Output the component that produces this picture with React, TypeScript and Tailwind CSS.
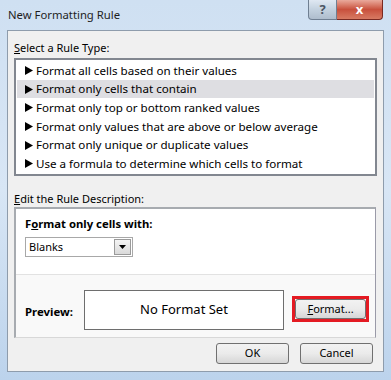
import React from "react";

const items = [
  "Format all cells based on their values",
  "Format only cells that contain",
  "Format only top or bottom ranked values",
  "Format only values that are above or below average",
  "Format only unique or duplicate values",
  "Use a formula to determine which cells to format",
];

function Arrow() {
  return (
    <svg width="8" height="9" viewBox="0 0 8 9" className="mr-[3px] shrink-0">
      <path d="M0 0 L8 4.5 L0 9 Z" fill="#000" />
    </svg>
  );
}

const btn =
  "border border-[#707070] rounded-[3px] bg-gradient-to-b from-[#f2f2f2] via-[#ebebeb] to-[#d6d6d6] flex items-center justify-center";

export default function App() {
  return (
    <div
      className="w-[391px] h-[380px] overflow-hidden flex flex-col bg-gradient-to-b from-[#cfe0f2] via-[#d8e6f5] to-[#bcd3ec] text-[11px] text-black"
      style={{ fontFamily: '"Noto Sans", "Open Sans", sans-serif' }}
    >
      {/* title bar */}
      <div className="h-[30px] flex items-start justify-between pl-[8px] pr-[8px] shrink-0">
        <div className="pt-[7px] text-[11.3px] text-[#1e1e1e]">New Formatting Rule</div>
        <div className="flex">
          <div className="w-[29px] h-[20px] rounded-bl-[4px] border border-[#6f7f92] border-t-0 bg-gradient-to-b from-[#dfe8f2] via-[#c3d1df] to-[#aebdcd] flex items-center justify-center text-[13px] font-bold text-[#4b5563]">
            ?
          </div>
          <div className="w-[46px] h-[20px] rounded-br-[4px] border border-[#7a2a22] border-t-0 border-l-0 bg-gradient-to-b from-[#e9a99c] via-[#c8503d] to-[#d77a63] flex items-center justify-center text-white font-bold text-[13px]">
            x
          </div>
        </div>
      </div>

      {/* client area */}
      <div className="mx-[7px] h-[342px] bg-[#f0f0f0] border border-[#8e9cac] flex flex-col px-[6px] shrink-0">
        <div className="mt-[8px] h-[18px] leading-[18px]">
          <span className="underline">S</span>elect a Rule Type:
        </div>
        <div className="mt-[1px] h-[118px] bg-white border-2 border-[#828790] py-[1px] px-[1px] flex flex-col">
          {items.map((t, i) => (
            <div
              key={t}
              className={`h-[19px] flex items-center pl-[8px] text-[11.6px] ${i === 1 ? "bg-[#dedee2]" : ""}`}
            >
              <Arrow />
              <span>{t}</span>
            </div>
          ))}
        </div>

        <div className="mt-[15px] h-[16px] leading-[16px]">
          <span className="underline">E</span>dit the Rule Description:
        </div>
        <div className="h-[131px] mr-[1px] border-t-2 border-l-2 border-[#a7abb0] border-r border-r-[#9a9aa8] border-b border-b-[#d8d8d8] flex flex-col">
          <div className="h-[65px] bg-white px-[9px] pt-[7px] flex flex-col">
            <div className="font-bold text-[11.3px] leading-[16px]">
              F<span className="underline">o</span>rmat only cells with:
            </div>
            <div className="mt-[5px] w-[108px] h-[20px] border border-[#a8a8a8] bg-white flex items-center justify-between pl-[3px] pr-[1px]">
              <span>Blanks</span>
              <div className="w-[17px] h-[16px] border border-[#9a9a9a] bg-gradient-to-b from-[#f4f4f4] to-[#dadada] flex items-center justify-center">
                <svg width="7" height="4" viewBox="0 0 7 4">
                  <path d="M0 0 L7 0 L3.5 4 Z" fill="#000" />
                </svg>
              </div>
            </div>
          </div>
          <div className="h-[1px] bg-[#e2e2e2]" />
          <div className="flex-1 bg-[#f9f9f9] flex items-start pl-[9px] pt-[15px]">
            <div className="font-bold text-[11.4px] w-[59px] h-[40px] flex items-center pt-[3px]">Preview:</div>
            <div className="w-[200px] h-[40px] bg-white border border-[#6e6e6e] flex items-center justify-center text-[13px]">
              No Format Set
            </div>
            <div className="ml-[8px] mt-[6px] border-[3px] border-[#e41b23]">
              <div className={`w-[71px] h-[20px] rounded-[2px] ${btn}`}>
                <span>
                  <span className="underline">F</span>ormat...
                </span>
              </div>
            </div>
          </div>
        </div>

        <div className="mt-[5px] flex justify-end gap-[11px] pr-[4px]">
          <div className={`w-[73px] h-[21px] ${btn}`}>OK</div>
          <div className={`w-[73px] h-[21px] ${btn}`}>Cancel</div>
        </div>
      </div>
    </div>
  );
}
